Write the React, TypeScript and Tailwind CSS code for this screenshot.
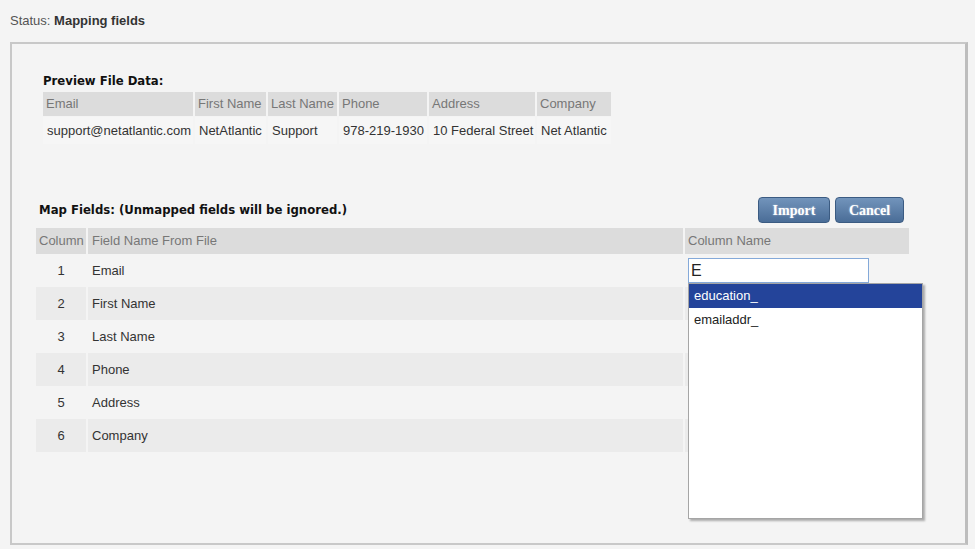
import { useState } from 'react';

const previewCols = ['Email', 'First Name', 'Last Name', 'Phone', 'Address', 'Company'];
const previewRow = ['support@netatlantic.com', 'NetAtlantic', 'Support', '978-219-1930', '10 Federal Street', 'Net Atlantic'];
const fields = ['Email', 'First Name', 'Last Name', 'Phone', 'Address', 'Company'];
const suggestions = ['education_', 'emailaddr_'];

const App = () => {
  const [value, setValue] = useState('E');

  return (
    <div className="w-[975px] h-[549px] overflow-hidden bg-[#f4f4f4] text-[13px] text-[#333] font-['Liberation_Sans',Arial,sans-serif]">
      {/* Status line */}
      <div className="h-[42px] pl-[10px] pt-[13px] leading-[15px]">
        <span className="text-[#555]">Status: </span>
        <span className="font-bold text-[#333]">Mapping fields</span>
      </div>

      {/* Main panel */}
      <div className="ml-[10px] w-[958px] h-[503px] border-2 border-r-[3px] border-[#c8c8c8] border-r-[#bdbdbd] bg-[#f4f4f4]">
        {/* Preview */}
        <div className="pl-[31px] pt-[30px]">
          <h2 className="font-['DejaVu_Sans',Verdana,sans-serif] font-bold text-[11.7px] leading-[14px] text-[#111]">
            Preview File Data:
          </h2>
          <div className="mt-[4px] grid grid-cols-[150px_71px_69px_88px_106px_74px] gap-x-[2px] gap-y-[1px] w-max">
            {previewCols.map((c) => (
              <div key={c} className="h-[24px] bg-[#dcdcdc] pl-[3px] flex items-center text-[#777]">
                {c}
              </div>
            ))}
            {previewRow.map((c, i) => (
              <div key={i} className="h-[27px] bg-[#f6f6f6] pl-[4px] flex items-center text-[#333] whitespace-nowrap">
                {c}
              </div>
            ))}
          </div>
        </div>

        {/* Map fields */}
        <div className="ml-[24px] w-[873px] mt-[53px]">
          <div className="flex items-center justify-between pl-[3px] pr-[5px]">
            <h2 className="font-['DejaVu_Sans',Verdana,sans-serif] font-bold text-[11.7px] leading-[14px] text-[#111]">
              Map Fields: (Unmapped fields will be ignored.)
            </h2>
            <div className="flex gap-[5px]">
              <button className="w-[72px] h-[26px] rounded-[4px] border border-[#3b5b82] bg-gradient-to-b from-[#7294bb] to-[#4a6d97] text-white font-bold text-[14px] font-['Liberation_Serif',Georgia,serif] [text-shadow:0_0_2px_rgba(255,255,255,0.5)]">
                Import
              </button>
              <button className="w-[69px] h-[26px] rounded-[4px] border border-[#3b5b82] bg-gradient-to-b from-[#7294bb] to-[#4a6d97] text-white font-bold text-[14px] font-['Liberation_Serif',Georgia,serif] [text-shadow:0_0_2px_rgba(255,255,255,0.5)]">
                Cancel
              </button>
            </div>
          </div>

          <div className="mt-[5px] grid grid-cols-[50px_595px_224px] gap-x-[2px]">
            <div className="h-[26px] bg-[#dcdcdc] pl-[3px] flex items-center text-[#777]">Column</div>
            <div className="h-[26px] bg-[#dcdcdc] pl-[4px] flex items-center text-[#777]">Field Name From File</div>
            <div className="h-[26px] bg-[#dcdcdc] pl-[3px] flex items-center text-[#777]">Column Name</div>

            {fields.map((f, i) => {
              const shade = i % 2 === 1 ? 'bg-[#ebebeb]' : '';
              return [
                <div key={`n${i}`} className={`h-[33px] flex items-center justify-center ${shade}`}>
                  {i + 1}
                </div>,
                <div key={`f${i}`} className={`h-[33px] pl-[4px] flex items-center ${shade}`}>
                  {f}
                </div>,
                <div key={`c${i}`} className={`h-[33px] pl-[3px] flex items-center ${shade}`}>
                  {i === 0 && (
                    <div className="relative">
                      <input
                        value={value}
                        onChange={(e) => setValue(e.target.value)}
                        className="w-[181px] h-[25px] bg-white border border-[#84a9d9] px-[2px] text-[16px] text-[#222] outline-none font-['Liberation_Sans',Arial,sans-serif]"
                      />
                      {/* Autocomplete menu */}
                      <div className="absolute left-0 top-full z-10 w-[235px] h-[236px] bg-white border border-[#a5a5a5] shadow-[2px_2px_2px_rgba(0,0,0,0.3)]">
                        {suggestions.map((s, j) => (
                          <div
                            key={s}
                            className={`h-[24px] pl-[5px] flex items-center ${
                              j === 0 ? 'bg-[#24449a] text-white' : 'text-[#222]'
                            }`}
                          >
                            {s}
                          </div>
                        ))}
                      </div>
                    </div>
                  )}
                </div>,
              ];
            })}
          </div>
        </div>
      </div>
    </div>
  );
};

export default App;
